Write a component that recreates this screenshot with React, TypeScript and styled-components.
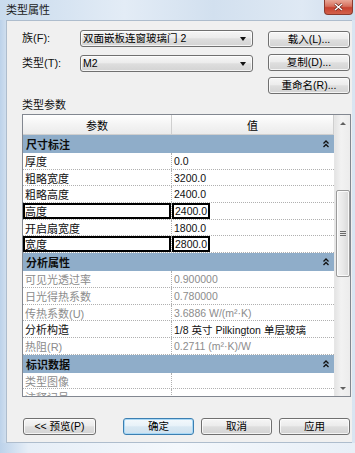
import React from 'react';
import styled, { createGlobalStyle, css } from 'styled-components';

const GlobalStyle = createGlobalStyle`
  html, body {
    margin: 0;
    padding: 0;
  }
  body {
    width: 355px;
    height: 453px;
    overflow: hidden;
    font-family: "Liberation Sans", "Noto Sans CJK SC", sans-serif;
    font-size: 11px;
    color: #000;
  }
  * {
    box-sizing: border-box;
  }
`;

const Window = styled.div`
  width: 355px;
  height: 453px;
  display: flex;
  flex-direction: column;
  background: linear-gradient(to right, #bcd2ea 0, #cfdeee 6px, #dbe7f3 40%, #cddcec 75%, #d9e5f2);
`;

const TitleBar = styled.div`
  height: 20px;
  display: flex;
  align-items: flex-start;
  padding-left: 6px;
  background: linear-gradient(to right, #c9dbed, #e3ecf6 35%, #d2e0ef 60%, #dfe9f4 85%, #cfdded);
`;

const Title = styled.span`
  margin-top: 3px;
  font-size: 11px;
  line-height: 14px;
  color: #1a1a1a;
`;

const CloseButton = styled.div`
  margin-left: auto;
  margin-right: 2px;
  width: 29px;
  height: 15px;
  border: 1px solid #8b3a2e;
  border-top: none;
  border-radius: 0 0 4px 4px;
  background: linear-gradient(#e9a797, #d6705d 45%, #c7412f 55%, #d2614c);
  display: flex;
  align-items: center;
  justify-content: center;
`;

const Panel = styled.div`
  flex: 1;
  margin: 0 3px 0 6px;
  border: 1px solid #aebdcd;
  border-right: none;
  background: #f0f0f0;
  padding: 9px 1px 0 15px;
  display: flex;
  flex-direction: column;
`;

const BottomFrame = styled.div`
  height: 10px;
  background: linear-gradient(to right, #bcd2ea, #e6eef7 8%, #f4f8fc 50%, #e8eff7);
`;

const TopArea = styled.div`
  display: flex;
  justify-content: space-between;
  align-items: flex-start;
`;

const FieldGrid = styled.div`
  display: grid;
  grid-template-columns: 58px 173px;
  grid-auto-rows: 17px;
  row-gap: 8px;
  align-items: center;
  align-content: start;
`;

const FieldLabel = styled.span`
  font-size: 11px;
  line-height: 13px;
  color: #111;
`;

const chrome = css`
  border: 1px solid #707070;
  border-radius: 3px;
  background: linear-gradient(#f6f6f6, #ececec 45%, #dedede 52%, #d3d3d3);
  box-shadow: inset 0 0 0 1px rgba(255, 255, 255, 0.75);
`;

const Combo = styled.div`
  ${chrome};
  height: 17px;
  display: flex;
  align-items: center;
  padding: 0 6px 0 2px;
  font-size: 10.5px;
  line-height: 13px;
`;

const ComboText = styled.span`
  flex: 1;
  white-space: nowrap;
`;

const ComboArrow = styled.span`
  width: 0;
  height: 0;
  border-left: 3.5px solid transparent;
  border-right: 3.5px solid transparent;
  border-top: 4px solid #111;
`;

const ButtonCol = styled.div`
  display: flex;
  flex-direction: column;
  gap: 6px;
  margin-top: 1px;
  margin-right: 1px;
`;

const PushButton = styled.div<{ $w: number; $default?: boolean }>`
  ${chrome};
  width: ${(p) => p.$w}px;
  height: 17px;
  display: flex;
  align-items: center;
  justify-content: center;
  font-size: 10.5px;
  line-height: 13px;
  white-space: nowrap;
  ${(p) =>
    p.$default &&
    css`
      border-color: #3c7fb1;
      box-shadow: inset 0 0 0 1px #a8d8f6;
      background: linear-gradient(#f4f9fc, #e8f2f9 45%, #d8e8f3 52%, #cfe1ee);
    `}
`;

const GroupLabel = styled.div`
  margin-top: 5px;
  margin-bottom: 2px;
  font-size: 11px;
  line-height: 13px;
  color: #111;
`;

const Table = styled.div`
  height: 283px;
  display: flex;
  border: 1px solid #828790;
  background: #fff;
`;

const TableMain = styled.div`
  flex: 1;
  display: flex;
  flex-direction: column;
  overflow: hidden;
`;

const HeaderRow = styled.div`
  display: grid;
  grid-template-columns: 149px 1fr;
  height: 20px;
  background: linear-gradient(#ffffff, #f4f4f4 50%, #ebebeb);
  border-bottom: 1px solid #cfcfcf;
`;

const HeadCell = styled.div`
  display: flex;
  align-items: center;
  justify-content: center;
  font-size: 11px;
  border-right: 1px solid #cfcfcf;
`;

const TableBody = styled.div`
  flex: 1;
  overflow: hidden;
`;

const SectionRow = styled.div`
  height: 18px;
  display: flex;
  align-items: center;
  justify-content: space-between;
  padding: 0 5px 0 3px;
  background: #8fadc9;
  font-size: 11px;
  font-weight: 700;
  color: #0d0d0d;
`;

const DataRow = styled.div`
  display: grid;
  grid-template-columns: 149px 1fr;
  height: 16.7px;
  border-bottom: 1px dotted #b0b0b0;
`;

const ParamCell = styled.div<{ $muted?: boolean; $boxed?: boolean }>`
  display: flex;
  align-items: center;
  padding-left: 2px;
  border-right: 1px dotted #b0b0b0;
  font-size: 11px;
  white-space: nowrap;
  color: ${(p) => (p.$muted ? '#8c8c8c' : '#111')};
  ${(p) => p.$boxed && css`box-shadow: inset 0 0 0 2px #000;`}
`;

const ValueCell = styled.div<{ $muted?: boolean }>`
  display: flex;
  align-items: center;
  padding-left: 2px;
  font-size: 10.5px;
  white-space: nowrap;
  color: ${(p) => (p.$muted ? '#8c8c8c' : '#111')};
`;

const BoxedValue = styled.span`
  display: flex;
  align-items: center;
  height: 100%;
  margin-left: -2px;
  padding: 0 1px 0 1px;
  border: 2px solid #000;
`;

const ScrollBar = styled.div`
  width: 16px;
  display: flex;
  flex-direction: column;
  background: linear-gradient(to right, #e4e4e4, #f2f2f2 40%, #ececec);
  border-left: 1px solid #e6e6e6;
`;

const ArrowBox = styled.div`
  height: 16px;
  display: flex;
  align-items: center;
  justify-content: center;
`;

const Arrow = styled.span<{ $down?: boolean }>`
  width: 0;
  height: 0;
  border-left: 3px solid transparent;
  border-right: 3px solid transparent;
  ${(p) =>
    p.$down
      ? css`border-top: 3px solid #606060;`
      : css`border-bottom: 3px solid #606060;`}
`;

const Track = styled.div`
  flex: 1;
  display: flex;
  flex-direction: column;
  align-items: center;
`;

const Thumb = styled.div`
  margin-top: 59px;
  width: 14px;
  height: 87px;
  border: 1px solid #9a9a9a;
  border-radius: 2px;
  background: linear-gradient(to right, #f3f3f3, #e8e8e8 50%, #d8d8d8);
  box-shadow: inset 0 0 0 1px rgba(255, 255, 255, 0.8);
  display: flex;
  flex-direction: column;
  align-items: center;
  justify-content: center;
  gap: 1px;
`;

const Grip = styled.span`
  width: 6px;
  height: 1px;
  background: #6a6a6a;
`;

const Footer = styled.div`
  margin-top: 21px;
  display: flex;
  align-items: center;
`;

const FooterGroup = styled.div`
  margin-left: auto;
  margin-right: 1px;
  display: flex;
  gap: 7px;
`;

const CollapseIcon = () => (
  <svg width="6" height="8" viewBox="0 0 6 8">
    <path d="M0.5 3.5 L3 1 L5.5 3.5 M0.5 7 L3 4.5 L5.5 7" fill="none" stroke="#111" strokeWidth="1.3" />
  </svg>
);

type Row = { name: string; value?: string; muted?: boolean; boxed?: boolean };
type Section = { title: string; rows: Row[] };

const sections: Section[] = [
  {
    title: '尺寸标注',
    rows: [
      { name: '厚度', value: '0.0' },
      { name: '粗略宽度', value: '3200.0' },
      { name: '粗略高度', value: '2400.0' },
      { name: '高度', value: '2400.0', boxed: true },
      { name: '开启扇宽度', value: '1800.0' },
      { name: '宽度', value: '2800.0', boxed: true },
    ],
  },
  {
    title: '分析属性',
    rows: [
      { name: '可见光透过率', value: '0.900000', muted: true },
      { name: '日光得热系数', value: '0.780000', muted: true },
      { name: '传热系数(U)', value: '3.6886 W/(m²·K)', muted: true },
      { name: '分析构造', value: '1/8 英寸 Pilkington 单层玻璃' },
      { name: '热阻(R)', value: '0.2711 (m²·K)/W', muted: true },
    ],
  },
  {
    title: '标识数据',
    rows: [
      { name: '类型图像', muted: true },
      { name: '注释记号', muted: true },
    ],
  },
];

const App: React.FC = () => (
  <>
    <GlobalStyle />
    <Window>
      <TitleBar>
        <Title>类型属性</Title>
        <CloseButton>
          <svg width="9" height="8" viewBox="0 0 9 8">
            <path d="M1 1 L8 7 M8 1 L1 7" stroke="#5a1a12" strokeWidth="2.6" />
            <path d="M1 1 L8 7 M8 1 L1 7" stroke="#fff" strokeWidth="1.5" />
          </svg>
        </CloseButton>
      </TitleBar>
      <Panel>
        <TopArea>
          <FieldGrid>
            <FieldLabel>族(F):</FieldLabel>
            <Combo>
              <ComboText>双面嵌板连窗玻璃门 2</ComboText>
              <ComboArrow />
            </Combo>
            <FieldLabel>类型(T):</FieldLabel>
            <Combo>
              <ComboText>M2</ComboText>
              <ComboArrow />
            </Combo>
          </FieldGrid>
          <ButtonCol>
            <PushButton $w={82}>载入(L)...</PushButton>
            <PushButton $w={82}>复制(D)...</PushButton>
            <PushButton $w={82}>重命名(R)...</PushButton>
          </ButtonCol>
        </TopArea>
        <GroupLabel>类型参数</GroupLabel>
        <Table>
          <TableMain>
            <HeaderRow>
              <HeadCell>参数</HeadCell>
              <HeadCell>值</HeadCell>
            </HeaderRow>
            <TableBody>
              {sections.map((s) => (
                <React.Fragment key={s.title}>
                  <SectionRow>
                    <span>{s.title}</span>
                    <CollapseIcon />
                  </SectionRow>
                  {s.rows.map((r) => (
                    <DataRow key={r.name}>
                      <ParamCell $muted={r.muted} $boxed={r.boxed}>
                        {r.name}
                      </ParamCell>
                      <ValueCell $muted={r.muted}>
                        {r.boxed ? <BoxedValue>{r.value}</BoxedValue> : r.value}
                      </ValueCell>
                    </DataRow>
                  ))}
                </React.Fragment>
              ))}
            </TableBody>
          </TableMain>
          <ScrollBar>
            <ArrowBox>
              <Arrow />
            </ArrowBox>
            <Track>
              <Thumb>
                <Grip />
                <Grip />
                <Grip />
              </Thumb>
            </Track>
            <ArrowBox>
              <Arrow $down />
            </ArrowBox>
          </ScrollBar>
        </Table>
        <Footer>
          <PushButton $w={73} style={{ marginLeft: 1 }}>
            &lt;&lt; 预览(P)
          </PushButton>
          <FooterGroup>
            <PushButton $w={71} $default>
              确定
            </PushButton>
            <PushButton $w={71}>取消</PushButton>
            <PushButton $w={71}>应用</PushButton>
          </FooterGroup>
        </Footer>
      </Panel>
      <BottomFrame />
    </Window>
  </>
);

export default App;
